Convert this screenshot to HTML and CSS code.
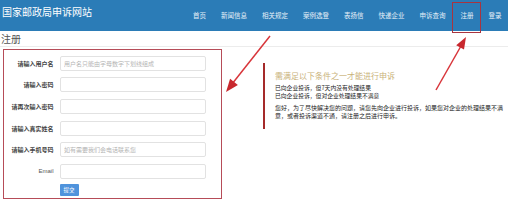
FILE: index.html
```html
<!DOCTYPE html>
<html lang="zh-CN">
<head>
<meta charset="utf-8">
<title>国家邮政局申诉网站 - 注册</title>
<link rel="stylesheet" href="styles.css">
</head>
<body>
<div class="page">
  <header class="topbar">
    <div class="brand">国家邮政局申诉网站</div>
    <nav class="nav">
      <a class="nav-item">首页</a>
      <a class="nav-item">新闻信息</a>
      <a class="nav-item">相关规定</a>
      <a class="nav-item">案例选登</a>
      <a class="nav-item">表扬信</a>
      <a class="nav-item">快递企业</a>
      <a class="nav-item">申诉查询</a>
      <a class="nav-item nav-active">注册</a>
      <a class="nav-item">登录</a>
    </nav>
  </header>
  <h1 class="page-title">注册</h1>
  <div class="divider"></div>
  <main class="content">
    <form class="reg-form">
      <label class="f-label">请输入用户名</label>
      <input class="f-input" type="text" placeholder="用户名只能由字母数字下划线组成">
      <label class="f-label">请输入密码</label>
      <input class="f-input" type="password">
      <label class="f-label">请再次输入密码</label>
      <input class="f-input" type="password">
      <label class="f-label">请输入真实姓名</label>
      <input class="f-input" type="text">
      <label class="f-label">请输入手机号码</label>
      <input class="f-input" type="text" placeholder="如有需要我们会电话联系您">
      <label class="f-label f-label-en">Email</label>
      <input class="f-input" type="text">
      <span></span>
      <div class="f-actions"><button class="f-btn" type="button">提交</button></div>
    </form>
    <aside class="notice">
      <div class="notice-title">需满足以下条件之一才能进行申诉</div>
      <p class="notice-line first">已向企业投诉，但7天内没有处理结果</p>
      <p class="notice-line">已向企业投诉，但对企业处理结果不满意</p>
      <p class="notice-para">您好，为了尽快解决您的问题，请您先向企业进行投诉，如果您对企业的处理结果不满意，或者投诉渠道不通，请注册之后进行申诉。</p>
    </aside>
  </main>
  <svg class="annot" width="508" height="202" viewBox="0 0 508 202">
    <line x1="270" y1="36" x2="232" y2="84" stroke="#d8353a" stroke-width="1.5"/>
    <polygon points="226,92 237.9,84.9 230.1,78.7" fill="#c8282e"/>
    <line x1="436" y1="90" x2="461" y2="46" stroke="#d8353a" stroke-width="1.5"/>
    <polygon points="466,37 464,49.6 456.2,45.2" fill="#c8282e"/>
  </svg>
</div>
</body>
</html>
```
FILE: styles.css
```css
* { box-sizing: border-box; }
html, body { margin: 0; padding: 0; background: #fff; }
body {
  font-family: "Noto Sans CJK SC", "Noto Sans", "Liberation Sans", sans-serif;
  color: #333;
}
.page {
  position: relative;
  width: 508px;
  height: 202px;
  overflow: hidden;
}
.topbar {
  height: 31px;
  background: #2b7cb7;
  display: flex;
  align-items: stretch;
  justify-content: space-between;
}
.brand {
  color: #fff;
  font-size: 10px;
  line-height: 10px;
  padding: 7px 0 0 2px;
  white-space: nowrap;
}
.nav {
  display: flex;
  flex-shrink: 0;
  margin-right: -1px;
}
.nav-item {
  position: relative;
  color: #e6f0f8;
  font-size: 6.5px;
  line-height: 31px;
  padding: 0 7.5px;
  white-space: nowrap;
}
.nav-active::after {
  content: "";
  position: absolute;
  top: 2px;
  bottom: -2px;
  left: -1.5px;
  right: 0.5px;
  border: 1.5px solid #a8343f;
}
.page-title {
  margin: 0;
  font-size: 10px;
  font-weight: normal;
  line-height: 12px;
  padding: 2px 0 0 1px;
  color: #555;
  height: 15px;
}
.divider {
  height: 1px;
  background: #ececec;
  margin-bottom: 2px;
}
.content {
  display: flex;
  align-items: flex-start;
  padding-left: 3px;
}
.reg-form {
  width: 219px;
  height: 150px;
  border: 1.5px solid #b64c58;
  display: grid;
  grid-template-columns: 49.5px 146px;
  grid-template-rows: repeat(6, 15px) 12px;
  column-gap: 6px;
  row-gap: 6.7px;
  align-content: start;
  padding-top: 5.5px;
  margin: 0;
}
.f-label {
  font-size: 6px;
  line-height: 15px;
  font-weight: bold;
  color: #444;
  text-align: right;
  white-space: nowrap;
}
.f-label-en {
  font-family: "Liberation Sans", sans-serif;
  font-weight: normal;
  color: #555;
}
.f-input {
  height: 15px;
  width: 146px;
  border: 1px solid #e2e2e2;
  border-radius: 2px;
  padding: 0 3.5px;
  font-size: 6px;
  font-family: inherit;
  background: #fff;
  outline: none;
}
.f-input::placeholder { color: #b4b4b4; }
.f-actions {
  display: flex;
  align-items: flex-start;
  margin-top: -1.5px;
}
.f-btn {
  display: block;
  width: 19px;
  height: 12px;
  border: none;
  border-radius: 1px;
  background: #4f93dc;
  color: #fff;
  font-size: 5.5px;
  font-family: inherit;
  padding: 0;
  line-height: 12px;
}
.notice {
  margin: 14px 0 0 41px;
  border-left: 2px solid #a52a2a;
  padding: 8px 0 10px 10px;
  width: 243px;
}
.notice-title {
  font-size: 8px;
  line-height: 10px;
  color: #c9b27a;
  white-space: nowrap;
}
.notice-line {
  margin: 0;
  font-size: 5.8px;
  line-height: 7.5px;
  color: #222;
  white-space: nowrap;
}
.notice-line.first { margin-top: 3px; }
.notice-para {
  margin: 5px 0 0 0;
  width: 231px;
  font-size: 6px;
  line-height: 7.5px;
  color: #222;
}
.annot {
  position: absolute;
  left: 0;
  top: 0;
  pointer-events: none;
}
```
